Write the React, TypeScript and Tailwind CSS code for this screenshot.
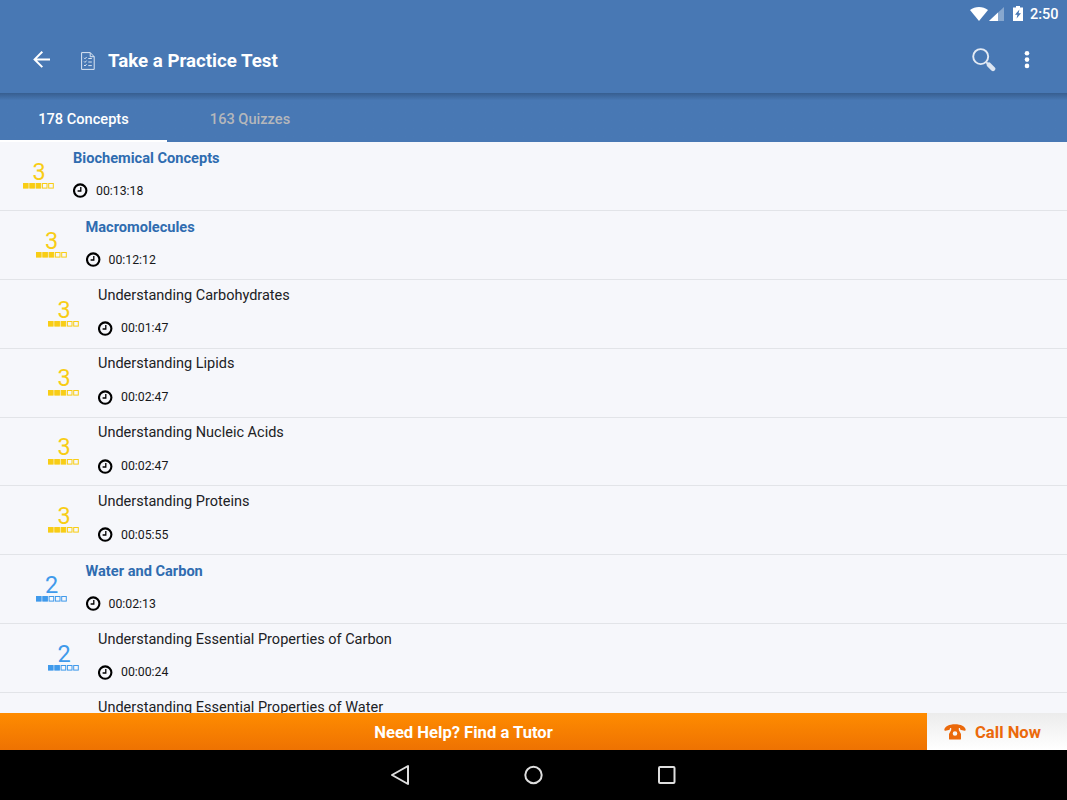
type Concept = {
  title: string;
  time?: string;
  level: 0 | 1 | 2;
  score: number;
};

const concepts: Concept[] = [
  { title: "Biochemical Concepts", time: "00:13:18", level: 0, score: 3 },
  { title: "Macromolecules", time: "00:12:12", level: 1, score: 3 },
  { title: "Understanding Carbohydrates", time: "00:01:47", level: 2, score: 3 },
  { title: "Understanding Lipids", time: "00:02:47", level: 2, score: 3 },
  { title: "Understanding Nucleic Acids", time: "00:02:47", level: 2, score: 3 },
  { title: "Understanding Proteins", time: "00:05:55", level: 2, score: 3 },
  { title: "Water and Carbon", time: "00:02:13", level: 1, score: 2 },
  {
    title: "Understanding Essential Properties of Carbon",
    time: "00:00:24",
    level: 2,
    score: 2,
  },
  {
    title: "Understanding Essential Properties of Water",
    level: 2,
    score: 2,
  },
];

const indents = ["pl-[23px]", "pl-[35.5px]", "pl-[48px]"];

function StatusBar() {
  return (
    <div className="flex h-[27px] items-center justify-end pr-[8.5px] text-white">
      <svg width="18" height="14" viewBox="0 0 18 14" fill="currentColor">
        <path d="M9 14 0 3C5-1 13-1 18 3z" />
      </svg>
      <svg className="ml-px" width="15" height="14" viewBox="0 0 15 14" fill="currentColor">
        <path d="M0 14 15 0v14z" opacity=".35" />
        <path d="M0 14 9 5.6V14z" />
      </svg>
      <svg className="ml-[9px]" width="10" height="15" viewBox="0 0 10 15">
        <path d="M3 0h4v1.5h3V15H0V1.5h3z" fill="#fff" />
        <path d="M6.4 3.4 2 8.8h2.4l-.8 3.8L8 7.2H5.6z" fill="#4878b4" />
      </svg>
      <span className="ml-[7px] pt-[3px] text-[14.5px] leading-none font-medium">2:50</span>
    </div>
  );
}

function Toolbar() {
  return (
    <div className="flex h-[66px] items-center text-white">
      <svg
        className="ml-[33px]"
        width="17"
        height="18"
        viewBox="0 0 17 18"
        fill="none"
        stroke="currentColor"
        strokeWidth="2"
      >
        <path d="M17 8.4H2M9.3.7 1.6 8.4l7.7 7.7" />
      </svg>
      <svg
        className="mt-[2px] ml-[30.5px]"
        width="14"
        height="18"
        viewBox="0 0 14 18"
        fill="none"
        stroke="#dce6f3"
      >
        <path d="M.6.6h8.6l4 4.1v12.7H.6zM9.2.6v4.1h4" />
        <path d="m3 5.8 1 1 1.6-1.8M3 9.4l1 1 1.6-1.8M3 13l1 1 1.6-1.8M7.3 6.5h3.5M7.3 10h3.5M7.3 13.6h3.5" />
      </svg>
      <h1 className="ml-[13.5px] pt-[2px] text-[18.7px] font-bold">Take a Practice Test</h1>
      <svg className="ml-auto" width="24" height="24" viewBox="0 0 24 24" fill="none">
        <circle cx="8.7" cy="8.6" r="7.5" stroke="#e3eaf4" strokeWidth="1.9" />
        <path d="m14 14 2.5 2.5" stroke="#dce5f2" strokeWidth="1.8" />
        <path d="m17 16.8 4 4" stroke="#dce5f2" strokeWidth="4.6" strokeLinecap="round" />
      </svg>
      <svg className="mr-[37px] ml-[28px]" width="6" height="18" viewBox="0 0 6 18" fill="currentColor">
        <circle cx="3" cy="2.3" r="2.3" />
        <circle cx="3" cy="8.6" r="2.3" />
        <circle cx="3" cy="14.9" r="2.3" />
      </svg>
    </div>
  );
}

function Tabs() {
  return (
    <div className="flex h-[49.4px] bg-linear-to-b from-[#375e90] via-[#4878b4] via-15% to-[#4878b4] text-[14.6px] font-medium">
      <div className="flex h-full w-[167px] items-center justify-center border-b-2 border-white pt-[6px] text-white">
        178 Concepts
      </div>
      <div className="flex h-full w-[166px] items-center justify-center pt-[4px] text-[#b5b7bb]">
        163 Quizzes
      </div>
    </div>
  );
}

function Score({ value }: { value: number }) {
  const color = value === 3 ? "text-[#f8cd16]" : "text-[#409aeb]";
  return (
    <div className={`flex w-[31px] flex-col items-center pt-[17.6px] ${color}`}>
      <span className="pl-px text-[23.5px] leading-6">{value}</span>
      <svg className="-mt-[0.6px]" width="31" height="6" viewBox="0 0 31 6" stroke="currentColor">
        {[0, 1, 2, 3, 4].map((i) => (
          <rect
            key={i}
            x={0.5 + i * 6.3}
            y="0.5"
            width="4.6"
            height="4.6"
            fill={i < value ? "currentColor" : "none"}
          />
        ))}
      </svg>
    </div>
  );
}

function ConceptRow({ title, time, level, score }: Concept) {
  return (
    <li className={`flex h-[68.8px] shrink-0 border-b border-[#e2e4e8] ${indents[level]}`}>
      <Score value={score} />
      <div className="ml-[19px] pt-[6.6px]">
        <div
          className={`leading-[18px] ${
            level < 2
              ? "text-[14.6px] font-bold text-[#2f6cb0]"
              : "text-[14.5px] text-[#202124]"
          }`}
        >
          {title}
        </div>
        {time && (
          <div className="mt-[15.9px] flex items-center text-[12.3px] leading-4 text-[#17181a]">
            <svg width="15" height="15" viewBox="0 0 15 15" fill="none" stroke="#000">
              <circle cx="7.2" cy="7.6" r="6.2" strokeWidth="2.1" />
              <path d="M7.8 4v4H4.6" strokeWidth="1.3" />
            </svg>
            <span className="ml-2">{time}</span>
          </div>
        )}
      </div>
    </li>
  );
}

function TutorBar() {
  return (
    <div className="flex h-[36.6px] shrink-0 text-[16.6px] font-bold">
      <div className="flex w-[927px] items-center justify-center bg-linear-to-b from-[#ff8c00] to-[#ee7202] pt-[3px] text-white">
        Need Help? Find a Tutor
      </div>
      <div className="flex flex-1 items-center bg-linear-to-b from-[#ececec] to-white pl-[17px] text-[#eb690b]">
        <svg width="22" height="16" viewBox="0 0 22 16" fill="currentColor">
          <path d="M.3 5.8C.8 2.4 5.2.3 11 .3s10.2 2.1 10.7 5.5c0 .7-.4 1-1 .9l-3.6-.6c-.5-.1-.8-.4-.9-.9l-.3-1.3H6.1l-.3 1.3c-.1.5-.4.8-.9.9l-3.6.6c-.6.1-1-.2-1-.9z" />
          <path
            fillRule="evenodd"
            d="M7.2 3.5h7.6V6l2.2 4v4.4c0 .8-.4 1.2-1 1.2H6c-.6 0-1-.4-1-1.2V10l2.2-4zM11 7.2a2.3 2.3 0 1 0 0 4.6 2.3 2.3 0 0 0 0-4.6z"
          />
        </svg>
        <span className="ml-[9px] pt-[3px]">Call Now</span>
      </div>
    </div>
  );
}

function NavBar() {
  return (
    <div className="flex h-[50px] shrink-0 items-center justify-center gap-[113px] bg-black text-[#dedede]">
      <svg width="20" height="22" viewBox="0 0 20 22" fill="none" stroke="currentColor" strokeWidth="2">
        <path d="M17 2v18L1 11z" strokeLinejoin="round" />
      </svg>
      <svg width="20" height="20" viewBox="0 0 20 20" fill="none" stroke="currentColor" strokeWidth="2">
        <circle cx="9.5" cy="10" r="8.2" />
      </svg>
      <svg width="20" height="20" viewBox="0 0 20 20" fill="none" stroke="currentColor" strokeWidth="2">
        <rect x="2" y="2" width="15.5" height="16" rx="1" />
      </svg>
    </div>
  );
}

export default function App() {
  return (
    <div className="flex h-[800px] w-[1067px] flex-col overflow-hidden bg-[#f6f7fb] font-['Roboto',sans-serif]">
      <header className="shrink-0 bg-[#4878b4]">
        <StatusBar />
        <Toolbar />
        <Tabs />
      </header>
      <ul className="flex min-h-0 flex-1 flex-col overflow-hidden">
        {concepts.map((concept) => (
          <ConceptRow key={concept.title} {...concept} />
        ))}
      </ul>
      <TutorBar />
      <NavBar />
    </div>
  );
}
